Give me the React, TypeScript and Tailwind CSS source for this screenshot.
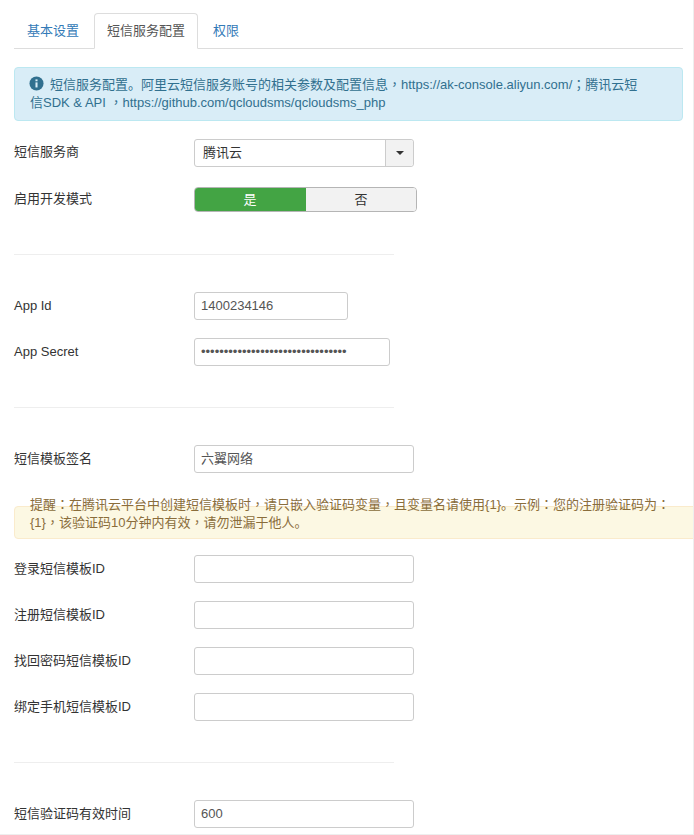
import { ReactElement } from "react";

const fontStack = "font-['Liberation_Sans','Noto_Sans_CJK_SC',sans-serif]";

// the fullwidth comma and colons sit centred in the reference, the full stop does not
function AlertText({ text }: { text: string }): ReactElement {
  return (
    <>
      {text.split(/([，：；])/).map((part: string, index: number) =>
        index % 2 === 1 ? (
          <span key={index} className="font-['Liberation_Sans','Noto_Sans_CJK_TC',sans-serif]">
            {part}
          </span>
        ) : (
          part
        )
      )}
    </>
  );
}

function Field({ label, value, width = "w-[220px]" }: { label: string; value?: string; width?: string }): ReactElement {
  return (
    <div className="flex items-center h-[28px]">
      <label className="w-[180px] shrink-0 text-[#333]">{label}</label>
      <div className={`${width} h-[28px] px-[6px] flex items-center bg-white border border-[#ccc] rounded-[3px] text-[#555] text-[13px]`}>
        {value}
      </div>
    </div>
  );
}

function Divider(): ReactElement {
  return <div className="w-[380px] h-px bg-[#eee]" />;
}

export default function App(): ReactElement {
  return (
    <div className={`${fontStack} relative w-[694px] h-[835px] overflow-hidden bg-white border-r border-b border-[#eee] px-[14px] text-[13px] leading-[18px] text-[#333]`}>
      {/* tabs */}
      <div className="pt-[13px] w-[669px] h-[49px] flex border-b border-[#ddd]">
        <div className="w-[80px] h-[36px] flex items-center justify-center pr-[2px] text-[#337ab7]">基本设置</div>
        <div className="w-[104px] h-[36px] flex items-center justify-center bg-white border border-[#ddd] border-b-white rounded-t-[4px] text-[#555]">
          短信服务配置
        </div>
        <div className="w-[56px] h-[36px] flex items-center justify-center text-[#337ab7]">权限</div>
      </div>

      {/* info alert */}
      <div className="mt-[18px] w-[669px] h-[54px] bg-[#d9edf7] border border-[#bce8f1] rounded-[4px] pl-[15px] pr-[40px] pt-[8px] text-[#31708f]">
        <svg viewBox="0 0 16 16" className="inline-block w-[15px] h-[15px] mr-[6px] -ml-px align-[-2px]" fill="#31708f">
          <circle cx="8" cy="8" r="7.5" />
          <rect x="6.9" y="6.8" width="2.2" height="5.4" fill="#d9edf7" />
          <rect x="6.9" y="3.6" width="2.2" height="2" fill="#d9edf7" />
        </svg>
        <AlertText text="短信服务配置。阿里云短信服务账号的相关参数及配置信息，https://ak-console.aliyun.com/；腾讯云短信SDK & API ，https://github.com/qcloudsms/qcloudsms_php" />
      </div>

      {/* provider select */}
      <div className="mt-[18px] flex items-center h-[28px]">
        <label className="w-[180px] shrink-0 -mt-[2px]">短信服务商</label>
        <div className="w-[220px] h-[28px] flex bg-white border border-[#ccc] rounded-[3px]">
          <div className="flex-1 px-[8px] flex items-center text-[#333]">腾讯云</div>
          <div className="w-[28px] flex items-center justify-center bg-[#f2f2f2] border-l border-[#ccc] rounded-r-[3px]">
            <div className="w-0 h-0 border-x-[4px] border-x-transparent border-t-[4px] border-t-[#333]" />
          </div>
        </div>
      </div>

      {/* dev mode switch */}
      <div className="mt-[20px] flex items-center h-[25px]">
        <label className="w-[180px] shrink-0 -mt-[2px]">启用开发模式</label>
        <div className="w-[223px] h-[25px] flex rounded-[4px] border border-[#b5b5b5] overflow-hidden">
          <div className="w-[112px] -my-px -ml-px flex items-center justify-center bg-[#43a444] text-white">是</div>
          <div className="flex-1 flex items-center justify-center bg-[#f2f2f2] text-[#333]">否</div>
        </div>
      </div>

      <div className="mt-[42px]">
        <Divider />
      </div>

      <div className="mt-[37px]">
        <Field label="App Id" value="1400234146" width="w-[154px]" />
      </div>
      <div className="mt-[18px]">
        <Field label="App Secret" value="••••••••••••••••••••••••••••••••" width="w-[196px]" />
      </div>

      <div className="mt-[41px]">
        <Divider />
      </div>

      <div className="mt-[37px]">
        <Field label="短信模板签名" value="六翼网络" />
      </div>

      {/* warning alert, text rides over the top edge */}
      <div className="mt-[33px] w-[690px] h-[33px] bg-[#fcf8e3] border border-[#faebcc] rounded-l-[4px] pl-[15px] text-[#8a6d3b]">
        <div className="-mt-[11px] w-[650px]">
          <AlertText text="提醒：在腾讯云平台中创建短信模板时，请只嵌入验证码变量，且变量名请使用{1}。示例：您的注册验证码为：{1}，该验证码10分钟内有效，请勿泄漏于他人。" />
        </div>
      </div>

      <div className="mt-[16px] flex flex-col gap-[18px]">
        <Field label="登录短信模板ID" />
        <Field label="注册短信模板ID" />
        <Field label="找回密码短信模板ID" />
        <Field label="绑定手机短信模板ID" />
      </div>

      <div className="mt-[41px]">
        <Divider />
      </div>

      <div className="mt-[37px]">
        <Field label="短信验证码有效时间" value="600" />
      </div>
    </div>
  );
}
